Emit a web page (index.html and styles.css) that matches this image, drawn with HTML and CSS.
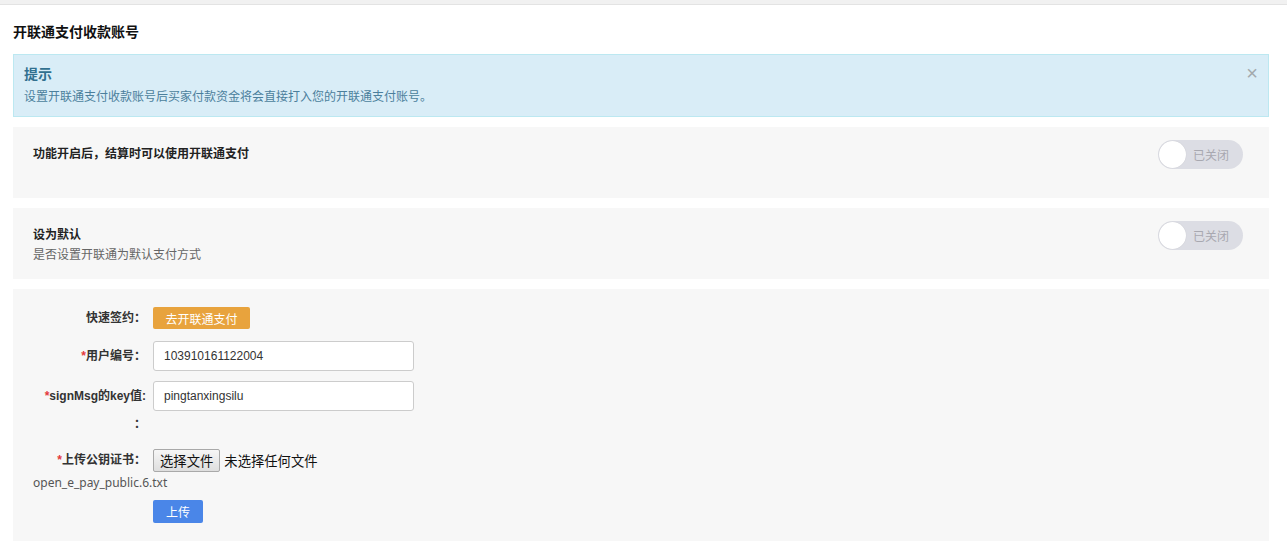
FILE: index.html
```html
<!DOCTYPE html>
<html lang="zh-CN">
<head>
<meta charset="utf-8">
<title>开联通支付收款账号</title>
<link rel="stylesheet" href="styles.css">
</head>
<body>
<div class="topband"></div>
<div class="page">
  <h1 class="title">开联通支付收款账号</h1>
  <div class="alert">
    <div class="alert-title">提示</div>
    <div class="alert-body">设置开联通支付收款账号后买家付款资金将会直接打入您的开联通支付账号。</div>
    <span class="alert-close">×</span>
  </div>

  <div class="row">
    <div class="row-text">
      <div class="row-title">功能开启后，结算时可以使用开联通支付</div>
    </div>
    <div class="switch"><span class="knob"></span><span class="switch-label">已关闭</span></div>
  </div>

  <div class="row">
    <div class="row-text">
      <div class="row-title">设为默认</div>
      <div class="row-sub">是否设置开联通为默认支付方式</div>
    </div>
    <div class="switch"><span class="knob"></span><span class="switch-label">已关闭</span></div>
  </div>

  <div class="form">
    <div class="form-row first">
      <label class="form-label">快速签约：</label>
      <button class="btn btn-orange" type="button">去开联通支付</button>
    </div>
    <div class="form-row">
      <label class="form-label"><span class="req">*</span>用户编号：</label>
      <input class="input" type="text" value="103910161122004">
    </div>
    <div class="form-row">
      <label class="form-label wrap"><span class="nowrap"><span class="req">*</span>signMsg的key值:</span><span class="colon-line">：</span></label>
      <input class="input" type="text" value="pingtanxingsilu">
    </div>
    <div class="form-row file-row">
      <label class="form-label"><span class="req">*</span>上传公钥证书：</label>
      <div class="file">
        <span class="file-btn">选择文件</span>
        <span class="file-name">未选择任何文件</span>
      </div>
    </div>
    <div class="filename">open_e_pay_public.6.txt</div>
    <div class="upload-row">
      <button class="btn btn-blue" type="button">上传</button>
    </div>
  </div>
</div>
</body>
</html>
```

FILE: styles.css
```css
html, body {
  margin: 0;
  padding: 0;
  background: #fff;
}
body {
  font-family: "Liberation Sans", "Noto Sans CJK SC", sans-serif;
  font-size: 12px;
  color: #333;
  text-spacing-trim: space-all;
}
.topband {
  height: 4px;
  background: #f1f1f1;
  border-bottom: 1px solid #e3e3e3;
}
.page {
  padding: 0 18px 0 13px;
}
.title {
  margin: 17px 0 12px;
  font-size: 14px;
  line-height: 20px;
  font-weight: bold;
  color: #111;
}
.alert {
  position: relative;
  background: #d9edf7;
  border: 1px solid #bce8f1;
  padding: 9px 10px 9px;
  color: #31708f;
}
.alert-title {
  font-size: 14px;
  line-height: 20px;
  font-weight: 600;
  margin-bottom: 3px;
}
.alert-body {
  font-size: 12px;
  line-height: 20px;
  color: #4b7f9c;
}
.alert-close {
  position: absolute;
  right: 10px;
  top: 8px;
  font-size: 20px;
  line-height: 20px;
  color: #a3a9ad;
}
.row {
  margin-top: 10px;
  height: 71px;
  box-sizing: border-box;
  background: #f7f7f7;
  padding: 17px 26px 0 20px;
  display: flex;
  justify-content: space-between;
  align-items: flex-start;
}
.row + .form {
  margin-top: 10px;
}
.row-title {
  font-weight: bold;
  line-height: 20px;
  color: #222;
}
.row-sub {
  line-height: 20px;
  color: #666;
}
.switch {
  margin-top: -4px;
  width: 85px;
  height: 29px;
  box-sizing: border-box;
  border-radius: 15px;
  background: #dcdde4;
  display: flex;
  align-items: center;
  padding-left: 1px;
}
.knob {
  width: 27px;
  height: 27px;
  border-radius: 50%;
  background: #fff;
  box-shadow: 0 0 1px rgba(0,0,0,0.15);
}
.switch-label {
  margin-left: 7px;
  color: #a8a8b0;
  font-size: 12px;
}
.form {
  background: #f7f7f7;
  padding: 18px 20px 18px;
}
.form-row {
  display: flex;
  align-items: flex-start;
  margin-bottom: 10px;
}
.form-row.first {
  margin-bottom: 12px;
}
.form-label {
  width: 113px;
  margin-right: 7px;
  text-align: right;
  font-weight: bold;
  line-height: 30px;
  color: #333;
  flex: none;
}
.form-row.first .form-label {
  line-height: 22px;
}
.form-label.wrap {
  line-height: 28px;
  padding-top: 1px;
}
.nowrap {
  white-space: nowrap;
}
.colon-line {
  display: block;
}
.req {
  color: #e4393c;
}
.btn {
  border: 0;
  border-radius: 2px;
  color: #fff;
  font-family: inherit;
  font-size: 12px;
  cursor: pointer;
}
.btn-orange {
  background: #e8a33d;
  height: 22px;
  padding: 0 12px;
  width: 97px;
}
.btn-blue {
  background: #4a86e8;
  height: 23px;
  width: 50px;
  padding: 0;
}
.input {
  width: 261px;
  height: 30px;
  box-sizing: border-box;
  border: 1px solid #ccc;
  border-radius: 3px;
  background: #fff;
  padding: 0 10px;
  font-family: inherit;
  font-size: 12px;
  color: #333;
  outline: none;
}
.file-row {
  margin-bottom: 0;
}
.file-row .form-label {
  line-height: 24px;
}
.file {
  display: flex;
  align-items: center;
  height: 24px;
  font-size: 13.33px;
  font-family: "Noto Sans CJK SC", sans-serif;
}
.file-btn {
  box-sizing: border-box;
  height: 23px;
  line-height: 21px;
  padding: 0 6px;
  border: 1px solid #a9a9a9;
  border-radius: 2px;
  background: linear-gradient(#f6f6f6, #dedede);
  color: #111;
}
.file-name {
  margin-left: 4px;
  color: #111;
}
.filename {
  line-height: 18px;
  margin-top: 2px;
  color: #555;
  font-family: "Noto Sans", "Noto Sans CJK SC", sans-serif;
  font-size: 12px;
}
.upload-row {
  padding-left: 120px;
  margin-top: 8px;
  height: 23px;
}
```
